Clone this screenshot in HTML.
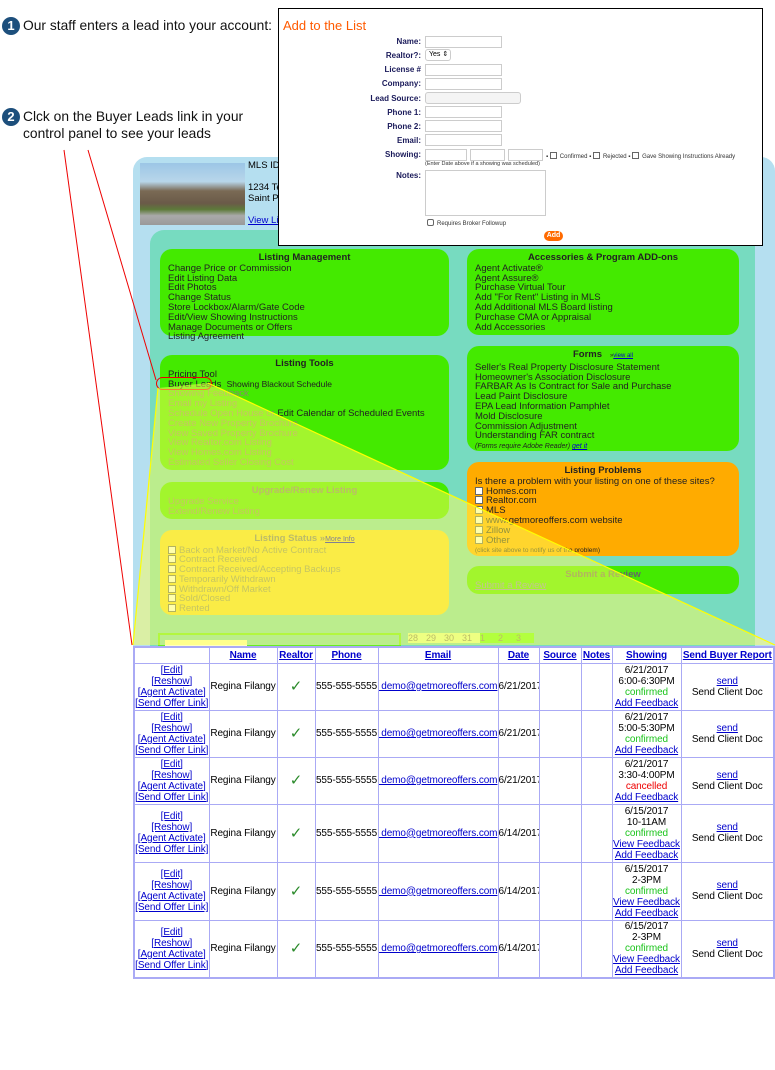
<!DOCTYPE html>
<html><head><meta charset="utf-8">
<style>
*{margin:0;padding:0;box-sizing:border-box}
body{width:775px;height:1070px;background:#fff;position:relative;overflow:hidden;font-family:"Liberation Sans",Arial,sans-serif;color:#000}
.a{position:absolute}
.step{font-size:13.8px;line-height:17px;color:#111}
.num{position:absolute;width:18px;height:18px;border-radius:50%;background:#1d4f7c;color:#fff;font-weight:bold;font-size:13px;text-align:center;line-height:18px}
.box{position:absolute;border-radius:12px;font-size:9.5px;line-height:9.8px;padding:4px 8px;color:#222;white-space:nowrap}
.box h4{font-size:9.5px;text-align:center;margin-bottom:1px;font-weight:bold}
.grey{color:#8a8a6a}
.cb{display:inline-block;width:8px;height:8px;border:1px solid #666;background:#fff;margin-right:3px;vertical-align:-1px}
.form{font-size:8px;color:#1a1a5a;font-weight:bold}
.in{position:absolute;height:12px;border:1px solid #ccc;background:#fff}
.lab{position:absolute;text-align:right;width:90px}
table{position:absolute;left:133px;top:646px;width:640px;table-layout:fixed;border-collapse:collapse;font-size:10px;letter-spacing:-0.1px;border:2px solid #aaaaf5;background:#fff;white-space:nowrap}
td,th{border:1px solid #aaaaf5;text-align:center;vertical-align:middle;line-height:11px;padding:0;overflow:hidden}
th{height:16px;color:#00c;text-decoration:underline;font-weight:bold}
a,.ln{color:#00c;text-decoration:underline}
.ck{color:#2a8a2a;font-size:15px}
.g{color:#1bc41b}.r{color:#e00}
</style></head><body>

<div class="num" style="left:2px;top:17px">1</div>
<div class="a step" style="left:23px;top:17px">Our staff enters a lead into your account:</div>
<div class="num" style="left:2px;top:108px">2</div>
<div class="a step" style="left:23px;top:108px">Clck on the Buyer Leads link in your<br>control panel to see your leads</div>

<div class="a" style="left:133px;top:157px;width:642px;height:495px;background:#b5dff0;border-radius:14px 14px 0 0"></div>
<div class="a" style="left:140px;top:163px;width:105px;height:62px;background:linear-gradient(#9cc6e6 0%,#b8d6ea 30%,#7a6a55 45%,#6a5a48 65%,#5d7a3a 75%,#aaa 85%,#999)"></div>
<div class="a" style="left:248px;top:160px;font-size:9.5px;line-height:11px">MLS ID<br><br>1234 Te<br>Saint Pe<br><br><span class="ln">View Lis</span></div>
<div class="a" style="left:150px;top:230px;width:605px;height:422px;background:#77dbc0;border-radius:14px 14px 0 0"></div>

<div class="box" style="left:160px;top:249px;width:289px;height:87px;background:#44ea00"><h4>Listing Management</h4>Change Price or Commission<br>Edit Listing Data<br>Edit Photos<br>Change Status<br>Store Lockbox/Alarm/Gate Code<br>Edit/View Showing Instructions<br>Manage Documents or Offers<br>Listing Agreement</div>
<div class="box" style="left:160px;top:355px;width:289px;height:115px;background:#44ea00"><h4>Listing Tools</h4>Pricing Tool<br>Buyer Leads &nbsp;<span style="font-size:8.5px">Showing Blackout Schedule</span><br><span class="grey">Showing Feedback<br>Email my Listing<br>Schedule Open House or </span>Edit Calendar of Scheduled Events<br><span class="grey">Create New Property Brochure<br>View Saved Property Brochure<br>View Realtor.com Listing<br>View Homes.com Listing<br>Estimated Seller Closing Cost</span></div>
<div class="a" style="left:156px;top:377px;width:56px;height:13px;border:1px solid #e00;border-radius:7px"></div>
<div class="box" style="left:160px;top:482px;width:289px;height:37px;background:#44ea00"><h4 style="color:#777">Upgrade/Renew Listing</h4><span class="grey">Upgrade Service<br>Extend/Renew Listing</span></div>
<div class="box" style="left:160px;top:530px;width:289px;height:85px;background:#f5d832;line-height:9.7px"><h4 style="color:#777">Listing Status »<span class="ln" style="font-size:7px;font-weight:normal">More Info</span></h4><span class="grey"><span class="cb"></span>Back on Market/No Active Contract<br><span class="cb"></span>Contract Received<br><span class="cb"></span>Contract Received/Accepting Backups<br><span class="cb"></span>Temporarily Withdrawn<br><span class="cb"></span>Withdrawn/Off Market<br><span class="cb"></span>Sold/Closed<br><span class="cb"></span>Rented</span></div>

<div class="box" style="left:467px;top:249px;width:272px;height:86px;background:#44ea00"><h4>Accessories &amp; Program ADD-ons</h4>Agent Activate®<br>Agent Assure®<br>Purchase Virtual Tour<br>Add "For Rent" Listing in MLS<br>Add Additional MLS Board listing<br>Purchase CMA or Appraisal<br>Add Accessories</div>
<div class="box" style="left:467px;top:346px;width:272px;height:105px;background:#44ea00"><h4>Forms &nbsp; <span style="font-size:6px;font-weight:normal">»<span class="ln">view all</span></span></h4>Seller's Real Property Disclosure Statement<br>Homeowner's Association Disclosure<br>FARBAR As Is Contract for Sale and Purchase<br>Lead Paint Disclosure<br>EPA Lead Information Pamphlet<br>Mold Disclosure<br>Commission Adjustment<br>Understanding FAR contract<br><i style="font-size:7px">(Forms require Adobe Reader) <span class="ln">get it</span></i></div>
<div class="box" style="left:467px;top:462px;width:272px;height:94px;background:#ffab00"><h4>Listing Problems</h4>Is there a problem with your listing on one of these sites?<br><span class="cb"></span>Homes.com<br><span class="cb"></span>Realtor.com<br><span class="cb"></span>MLS<br><span class="cb"></span>www.getmoreoffers.com website<br><span class="cb"></span>Zillow<br><span class="cb"></span>Other<br><span style="font-size:6.5px">(click site above to notify us of the problem)</span></div>
<div class="box" style="left:467px;top:566px;width:272px;height:28px;background:#44ea00"><h4 style="color:#666">Submit a Review</h4><span class="ln" style="color:#88c">Submit a Review</span></div>

<div class="a" style="left:158px;top:633px;width:243px;height:14px;border:2px solid #66ee22"></div>
<div class="a" style="left:165px;top:640px;width:82px;height:7px;background:#ffffc0"></div>
<div class="a" style="left:408px;top:633px;font-size:9px;color:#777;display:flex">
<span style="width:18px;background:#ddffaa">28</span><span style="width:18px;background:#ddffaa">29</span><span style="width:18px;background:#ddffaa">30</span><span style="width:18px;background:#ddffaa">31</span><span style="width:18px;background:#66ff22">1</span><span style="width:18px;background:#66ff22">2</span><span style="width:18px;background:#66ff22">3</span></div>

<svg class="a" style="left:0;top:0" width="775" height="660">
<polygon points="158,388 208,383 775,645 133,645" fill="rgba(255,255,90,0.5)"/>
<line x1="158" y1="388" x2="133" y2="645" stroke="#ffff00" stroke-width="1.2"/>
<line x1="208" y1="383" x2="775" y2="645" stroke="#ffff00" stroke-width="1.2"/>
<line x1="64" y1="150" x2="132" y2="645" stroke="#e00" stroke-width="1"/>
<line x1="88" y1="150" x2="156" y2="380" stroke="#e00" stroke-width="1"/>
</svg>

<div class="a" style="left:278px;top:8px;width:485px;height:238px;background:#fff;border:1px solid #000">
<div class="a" style="left:4px;top:9px;font-size:13px;color:#ff5a00">Add to the List</div>
<div class="form">
<div class="lab" style="left:52px;top:28px">Name:</div><div class="in" style="left:146px;top:27px;width:77px"></div>
<div class="lab" style="left:52px;top:42px">Realtor?:</div><div class="in" style="left:146px;top:40px;width:26px;border-radius:3px;font-size:7px;font-weight:normal;color:#000;padding-left:3px;line-height:10px">Yes ⇕</div>
<div class="lab" style="left:52px;top:56px">License #</div><div class="in" style="left:146px;top:55px;width:77px"></div>
<div class="lab" style="left:52px;top:70px">Company:</div><div class="in" style="left:146px;top:69px;width:77px"></div>
<div class="lab" style="left:52px;top:85px">Lead Source:</div><div class="in" style="left:146px;top:83px;width:96px;border-radius:3px;background:#f4f4f4"></div>
<div class="lab" style="left:52px;top:99px">Phone 1:</div><div class="in" style="left:146px;top:97px;width:77px"></div>
<div class="lab" style="left:52px;top:113px">Phone 2:</div><div class="in" style="left:146px;top:111px;width:77px"></div>
<div class="lab" style="left:52px;top:127px">Email:</div><div class="in" style="left:146px;top:125px;width:77px"></div>
<div class="lab" style="left:52px;top:141px">Showing:</div><div class="in" style="left:146px;top:140px;width:42px"></div><div class="in" style="left:191px;top:140px;width:35px"></div><div class="in" style="left:229px;top:140px;width:35px"></div>
<div class="a" style="left:267px;top:143px;font-size:6px;font-weight:normal;color:#333;white-space:nowrap">▪ <span class="cb" style="width:7px;height:7px"></span>Confirmed ▪ <span class="cb" style="width:7px;height:7px"></span>Rejected ▪ <span class="cb" style="width:7px;height:7px"></span>Gave Showing Instructions Already</div>
<div class="a" style="left:146px;top:152px;font-size:5.5px;font-weight:normal;color:#333;white-space:nowrap">(Enter Date above if a showing was scheduled)</div>
<div class="lab" style="left:52px;top:162px">Notes:</div><div class="in" style="left:146px;top:161px;width:121px;height:46px"></div>
<div class="a" style="left:148px;top:210px;font-size:6px;font-weight:normal;color:#333;white-space:nowrap"><span class="cb" style="width:7px;height:7px;border-radius:2px"></span>Requires Broker Followup</div>
<div class="a" style="left:265px;top:222px;width:19px;height:10px;border-radius:5px;background:#ff6a00;color:#fff;font-size:7px;text-align:center;line-height:10px">Add</div>
</div></div>

<table>
<colgroup><col style="width:75px"><col style="width:68px"><col style="width:38px"><col style="width:63px"><col style="width:120px"><col style="width:41px"><col style="width:42px"><col style="width:31px"><col style="width:69px"><col style="width:93px"></colgroup>
<tr><th></th><th>Name</th><th>Realtor</th><th>Phone</th><th>Email</th><th>Date</th><th>Source</th><th>Notes</th><th>Showing</th><th>Send Buyer Report</th></tr>
<tr style="height:47px"><td><a>[Edit]</a><br><a>[Reshow]</a><br><a>[Agent Activate]</a><br><a>[Send Offer Link]</a></td><td>Regina Filangy</td><td class="ck">✓</td><td>555-555-5555</td><td><a>&nbsp;demo@getmoreoffers.com</a></td><td>6/21/2017</td><td></td><td></td><td>6/21/2017<br>6:00-6:30PM<br><span class="g">confirmed</span><br><a>Add Feedback</a></td><td><a>send</a><br>Send Client Doc</td></tr>
<tr style="height:47px"><td><a>[Edit]</a><br><a>[Reshow]</a><br><a>[Agent Activate]</a><br><a>[Send Offer Link]</a></td><td>Regina Filangy</td><td class="ck">✓</td><td>555-555-5555</td><td><a>&nbsp;demo@getmoreoffers.com</a></td><td>6/21/2017</td><td></td><td></td><td>6/21/2017<br>5:00-5:30PM<br><span class="g">confirmed</span><br><a>Add Feedback</a></td><td><a>send</a><br>Send Client Doc</td></tr>
<tr style="height:47px"><td><a>[Edit]</a><br><a>[Reshow]</a><br><a>[Agent Activate]</a><br><a>[Send Offer Link]</a></td><td>Regina Filangy</td><td class="ck">✓</td><td>555-555-5555</td><td><a>&nbsp;demo@getmoreoffers.com</a></td><td>6/21/2017</td><td></td><td></td><td>6/21/2017<br>3:30-4:00PM<br><span class="r">cancelled</span><br><a>Add Feedback</a></td><td><a>send</a><br>Send Client Doc</td></tr>
<tr style="height:58px"><td><a>[Edit]</a><br><a>[Reshow]</a><br><a>[Agent Activate]</a><br><a>[Send Offer Link]</a></td><td>Regina Filangy</td><td class="ck">✓</td><td>555-555-5555</td><td><a>&nbsp;demo@getmoreoffers.com</a></td><td>6/14/2017</td><td></td><td></td><td>6/15/2017<br>10-11AM<br><span class="g">confirmed</span><br><a>View Feedback</a><br><a>Add Feedback</a></td><td><a>send</a><br>Send Client Doc</td></tr>
<tr style="height:58px"><td><a>[Edit]</a><br><a>[Reshow]</a><br><a>[Agent Activate]</a><br><a>[Send Offer Link]</a></td><td>Regina Filangy</td><td class="ck">✓</td><td>555-555-5555</td><td><a>&nbsp;demo@getmoreoffers.com</a></td><td>6/14/2017</td><td></td><td></td><td>6/15/2017<br>2-3PM<br><span class="g">confirmed</span><br><a>View Feedback</a><br><a>Add Feedback</a></td><td><a>send</a><br>Send Client Doc</td></tr>
<tr style="height:58px"><td><a>[Edit]</a><br><a>[Reshow]</a><br><a>[Agent Activate]</a><br><a>[Send Offer Link]</a></td><td>Regina Filangy</td><td class="ck">✓</td><td>555-555-5555</td><td><a>&nbsp;demo@getmoreoffers.com</a></td><td>6/14/2017</td><td></td><td></td><td>6/15/2017<br>2-3PM<br><span class="g">confirmed</span><br><a>View Feedback</a><br><a>Add Feedback</a></td><td><a>send</a><br>Send Client Doc</td></tr>
</table>
</body></html>
